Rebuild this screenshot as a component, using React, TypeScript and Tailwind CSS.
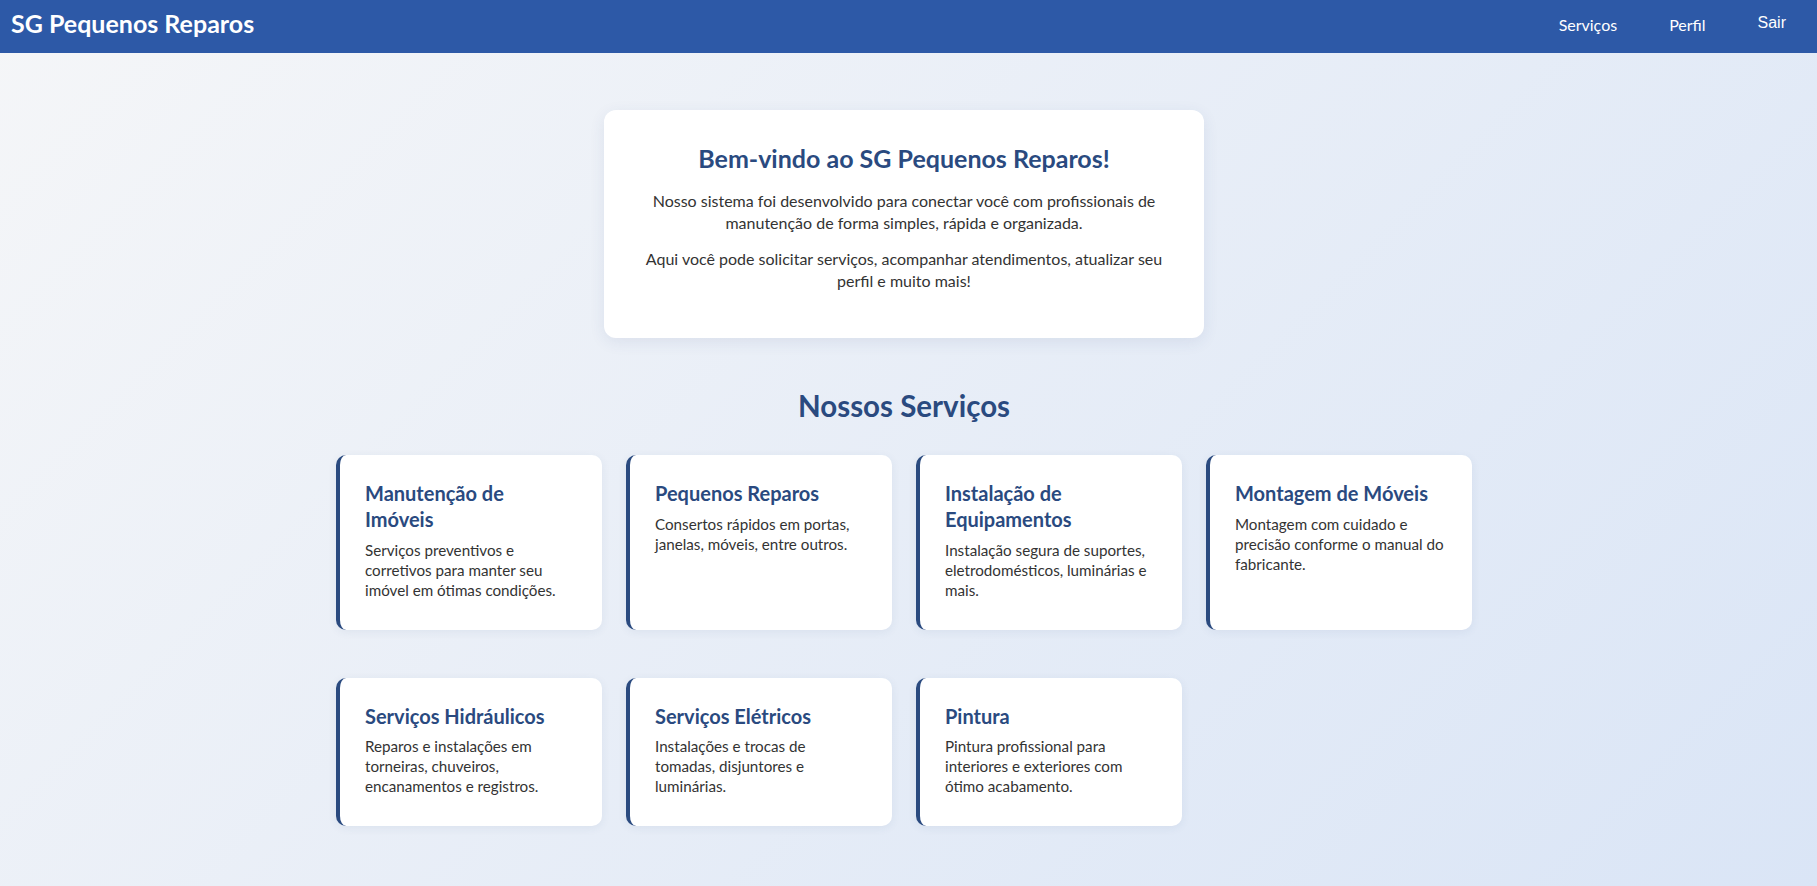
const services = [
  {
    title: "Manutenção de Imóveis",
    text: "Serviços preventivos e corretivos para manter seu imóvel em ótimas condições.",
  },
  {
    title: "Pequenos Reparos",
    text: "Consertos rápidos em portas, janelas, móveis, entre outros.",
  },
  {
    title: "Instalação de Equipamentos",
    text: "Instalação segura de suportes, eletrodomésticos, luminárias e mais.",
  },
  {
    title: "Montagem de Móveis",
    text: "Montagem com cuidado e precisão conforme o manual do fabricante.",
  },
  {
    title: "Serviços Hidráulicos",
    text: "Reparos e instalações em torneiras, chuveiros, encanamentos e registros.",
  },
  {
    title: "Serviços Elétricos",
    text: "Instalações e trocas de tomadas, disjuntores e luminárias.",
  },
  {
    title: "Pintura",
    text: "Pintura profissional para interiores e exteriores com ótimo acabamento.",
  },
];

function Header() {
  return (
    <header className="h-[53px] bg-[#2d59a7] flex items-center justify-between pl-[11px] pr-[31px] pb-[6px] text-white">
      <h1 className="text-[25px] leading-[33px] font-bold">SG Pequenos Reparos</h1>
      <nav className="flex items-center gap-[52px] pt-[2px]">
        <a className="text-[16px] leading-[21px] cursor-pointer">Serviços</a>
        <a className="text-[16px] leading-[21px] cursor-pointer">Perfil</a>
        <button className="text-[16px] leading-[18px] mb-[3px] font-['Liberation_Sans',Arial,sans-serif] cursor-pointer">
          Sair
        </button>
      </nav>
    </header>
  );
}

function ServiceCard({ title, text }: { title: string; text: string }) {
  return (
    <div className="bg-white rounded-[10px] border-l-4 border-[#2a4a7f] shadow-[0_2px_10px_rgba(40,70,120,0.07)] pl-[25px] pr-[26px] pt-[26px] pb-[30px]">
      <h3 className="text-[20px] leading-[25.7px] font-bold text-[#2a4a7f] mb-[7px]">{title}</h3>
      <p className="text-[15.2px] leading-[20px] text-[#333]">{text}</p>
    </div>
  );
}

export default function App() {
  return (
    <div className="min-h-screen bg-[linear-gradient(135deg,#f5f6f8_0%,#dae5f6_100%)] font-['Lato','Noto_Sans',sans-serif]">
      <Header />
      <main className="pr-[9px] pt-[57px] pb-[62px]">
        <section className="w-[600px] mx-auto bg-white rounded-[12px] shadow-[0_4px_16px_rgba(40,70,120,0.09)] px-8 pt-8 pb-[47px] text-center">
          <h2 className="text-[25px] leading-[33px] font-bold text-[#2a4a7f] mb-[15px]">
            Bem-vindo ao SG Pequenos Reparos!
          </h2>
          <p className="text-[16px] leading-[21.5px] text-[#333] mb-[15px]">
            Nosso sistema foi desenvolvido para conectar você com profissionais de manutenção de forma simples,
            rápida e organizada.
          </p>
          <p className="text-[16px] leading-[21.5px] text-[#333]">
            Aqui você pode solicitar serviços, acompanhar atendimentos, atualizar seu perfil e muito mais!
          </p>
        </section>

        <h2 className="mt-[49px] text-center text-[29.5px] leading-[38.3px] font-bold text-[#2a4a7f]">
          Nossos Serviços
        </h2>

        <div className="w-[1136px] mx-auto mt-[30px] grid grid-cols-4 gap-x-6 gap-y-[48px]">
          {services.map((s) => (
            <ServiceCard key={s.title} title={s.title} text={s.text} />
          ))}
        </div>
      </main>
    </div>
  );
}
